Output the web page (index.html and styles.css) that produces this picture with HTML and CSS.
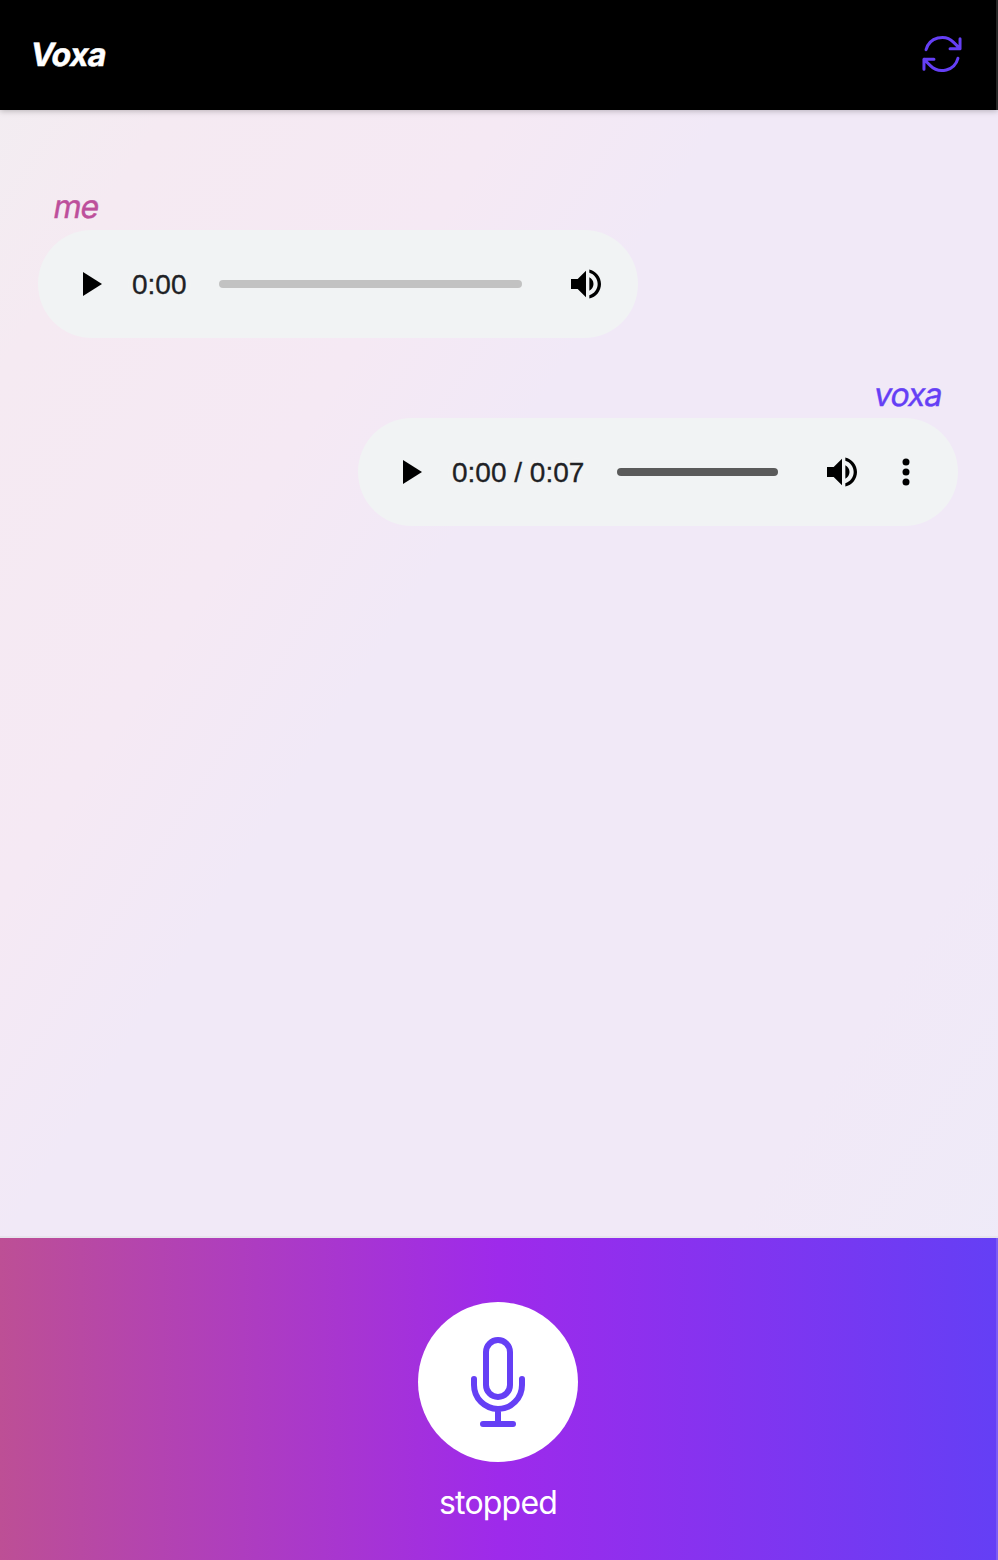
FILE: index.html
```html
<!DOCTYPE html>
<html lang="en">
<head>
<meta charset="utf-8">
<title>Voxa</title>
<link rel="stylesheet" href="styles.css">
</head>
<body>
<div class="app">
  <header class="header">
    <h1 class="brand">Voxa</h1>
    <button class="reset" aria-label="Reset">
      <svg viewBox="0 0 24 24" width="48" height="48" fill="none" stroke="currentColor" stroke-width="1.5" stroke-linecap="round" stroke-linejoin="round"><path d="M16.023 9.348h4.992v-.001M2.985 19.644v-4.992m0 0h4.992m-4.993 0l3.181 3.183a8.25 8.25 0 0013.803-3.7M4.031 9.865a8.25 8.25 0 0113.803-3.7l3.181 3.182m0-4.991v4.99"/></svg>
    </button>
  </header>
  <main class="messages">
    <section class="message">
      <p class="sender sender-me">me</p>
      <div class="player">
        <svg class="play" viewBox="0 0 19 24"><path d="M0 0v24l19-12z"/></svg>
        <span class="time">0:00</span>
        <span class="track"></span>
        <svg class="icon volume" viewBox="0 0 24 24"><path d="M3 9v6h4l5 5V4L7 9H3zm13.5 3c0-1.77-1.02-3.29-2.5-4.03v8.05c1.48-.73 2.5-2.25 2.5-4.02zM14 3.23v2.06c2.89.86 5 3.54 5 6.71s-2.11 5.85-5 6.71v2.06c4.01-.91 7-4.49 7-8.77s-2.99-7.86-7-8.77z"/></svg>
      </div>
    </section>
    <section class="message message-reply">
      <p class="sender sender-voxa">voxa</p>
      <div class="player player-loaded">
        <svg class="play" viewBox="0 0 19 24"><path d="M0 0v24l19-12z"/></svg>
        <span class="time">0:00 / 0:07</span>
        <span class="track"></span>
        <svg class="icon volume" viewBox="0 0 24 24"><path d="M3 9v6h4l5 5V4L7 9H3zm13.5 3c0-1.77-1.02-3.29-2.5-4.03v8.05c1.48-.73 2.5-2.25 2.5-4.02zM14 3.23v2.06c2.89.86 5 3.54 5 6.71s-2.11 5.85-5 6.71v2.06c4.01-.91 7-4.49 7-8.77s-2.99-7.86-7-8.77z"/></svg>
        <svg class="icon menu" viewBox="0 0 32 32"><circle cx="16" cy="6" r="3.5"/><circle cx="16" cy="16" r="3.5"/><circle cx="16" cy="26" r="3.5"/></svg>
      </div>
    </section>
  </main>
  <footer class="footer">
    <button class="record" aria-label="Record">
      <svg viewBox="0 0 24 24" width="96" height="96" fill="none" stroke="currentColor" stroke-width="1.5" stroke-linecap="round" stroke-linejoin="round"><path d="M12 18.75a6 6 0 006-6v-1.5m-6 7.5a6 6 0 01-6-6v-1.5m6 7.5v3.75m-3.75 0h7.5M12 15.75a3 3 0 01-3-3V4.5a3 3 0 116 0v8.25a3 3 0 01-3 3z"/></svg>
    </button>
    <p class="status">stopped</p>
  </footer>
</div>
</body>
</html>
```

FILE: styles.css
```css
* { box-sizing: border-box; }
body { margin: 0; font-family: Inter, "Liberation Sans", sans-serif; }
h1, p { margin: 0; }
button { border: 0; padding: 0; display: flex; align-items: center; justify-content: center; color: #653ff5; }
.app {
  height: 1560px;
  display: flex;
  flex-direction: column;
  background: linear-gradient(to bottom right, #f2eef1 0%, #f5eaf2 12%, #f5e9f4 29%, #f1e9f7 40%, #f1e9f7 76%, #eeebf8 93%, #edebf8 100%);
}
.header {
  height: 110px;
  flex: none;
  display: flex;
  align-items: center;
  justify-content: space-between;
  padding: 0 30px 2px 31px;
  background: #000;
  border-right: 2px solid #262626;
  box-shadow: 0 1px 6px rgba(0, 0, 0, .25);
}
/* Slanted upright letterforms keep the two-storey "a". */
.brand, .sender { transform: skewX(-10deg); }
.brand { padding-top: 2px; font-size: 32px; line-height: 48px; font-weight: 700; color: #fff; letter-spacing: -.7px; -webkit-text-stroke: .5px #fff; }
.reset { background: none; }
.messages { flex: 1; padding: 72px 40px 0 38px; display: flex; flex-direction: column; gap: 32px; }
.message { width: 600px; }
.message-reply { align-self: flex-end; }
.sender { height: 48px; line-height: 50px; padding: 0 16px; font-size: 32px; letter-spacing: -1px; -webkit-text-stroke: .4px currentColor; }
.sender-me { color: #bd4f9b; }
.sender-voxa { color: #653ff5; text-align: right; }
.player {
  height: 108px;
  border-radius: 54px;
  background: #f1f3f4;
  display: flex;
  align-items: center;
  padding: 0 32px 0 45px;
}
.play { width: 19px; height: 24px; margin-right: 30px; }
.time { padding-top: 2px; font: 28px/36px "Liberation Sans", Arial, sans-serif; color: #202124; -webkit-text-stroke: .3px #202124; white-space: pre; text-shadow: 0 0 10px #f5f5f5; }
.track { flex: 1; height: 8px; border-radius: 4px; background: #c2c2c2; margin: 0 44px 0 32.5px; }
.icon { width: 40px; height: 40px; flex: none; }
.player-loaded .track { background: #5a5a5a; }
.menu { width: 32px; height: 32px; margin-left: 28px; }
.player-loaded { padding-right: 36px; }
.footer {
  height: 324px;
  flex: none;
  display: flex;
  flex-direction: column;
  align-items: center;
  padding: 64px 0 0;
  box-shadow: inset 0 2px #e7e4ec, inset -2px 0 #7a5bf5;
  background: linear-gradient(to right, #bd4f95, #9e2aeb 50%, #643ff5);
}
.record { width: 160px; height: 160px; margin: 2px 2px 0 0; border-radius: 50%; background: #fff; }
.status { margin: 17px 2px 0 0; font-size: 32px; line-height: 48px; color: #fff; letter-spacing: -.8px; }
```
